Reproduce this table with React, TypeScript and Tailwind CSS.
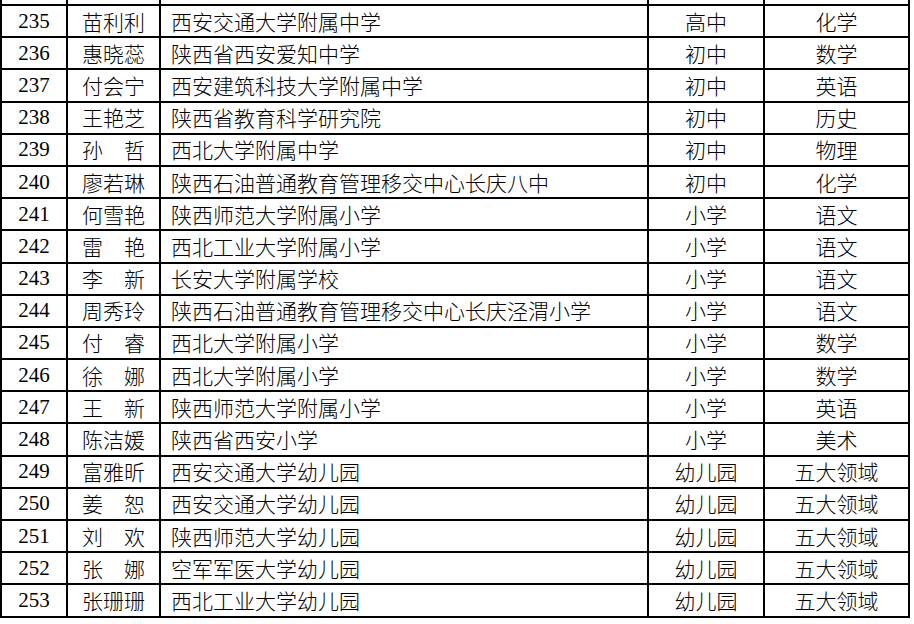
import React from "react";

type Row = [string, string, string, string, string];

const rows: Row[] = [
  ["235", "苗利利", "西安交通大学附属中学", "高中", "化学"],
  ["236", "惠晓蕊", "陕西省西安爱知中学", "初中", "数学"],
  ["237", "付会宁", "西安建筑科技大学附属中学", "初中", "英语"],
  ["238", "王艳芝", "陕西省教育科学研究院", "初中", "历史"],
  ["239", "孙哲", "西北大学附属中学", "初中", "物理"],
  ["240", "廖若琳", "陕西石油普通教育管理移交中心长庆八中", "初中", "化学"],
  ["241", "何雪艳", "陕西师范大学附属小学", "小学", "语文"],
  ["242", "雷艳", "西北工业大学附属小学", "小学", "语文"],
  ["243", "李新", "长安大学附属学校", "小学", "语文"],
  ["244", "周秀玲", "陕西石油普通教育管理移交中心长庆泾渭小学", "小学", "语文"],
  ["245", "付睿", "西北大学附属小学", "小学", "数学"],
  ["246", "徐娜", "西北大学附属小学", "小学", "数学"],
  ["247", "王新", "陕西师范大学附属小学", "小学", "英语"],
  ["248", "陈洁媛", "陕西省西安小学", "小学", "美术"],
  ["249", "富雅昕", "西安交通大学幼儿园", "幼儿园", "五大领域"],
  ["250", "姜恕", "西安交通大学幼儿园", "幼儿园", "五大领域"],
  ["251", "刘欢", "陕西师范大学幼儿园", "幼儿园", "五大领域"],
  ["252", "张娜", "空军军医大学幼儿园", "幼儿园", "五大领域"],
  ["253", "张珊珊", "西北工业大学幼儿园", "幼儿园", "五大领域"],
];

function Name({ n }: { n: string }) {
  const chars = Array.from(n);
  return (
    <div className="flex w-[3em] justify-between">
      {chars.map((c, i) => (
        <span key={i}>{c}</span>
      ))}
    </div>
  );
}

export default function App() {
  return (
    <div className="w-[914px] h-[624px] bg-white overflow-hidden text-black text-[21px] leading-none font-[family-name:Noto_Sans_CJK_SC]">
      <div className="w-[910px] border-l-2 border-black">
        <div className="flex h-[4px]">
          <div className="w-[66px] border-r-2 border-black" />
          <div className="w-[93px] border-r-2 border-black" />
          <div className="w-[488px] border-r-2 border-black" />
          <div className="w-[116px] border-r-2 border-black" />
          <div className="w-[145px] border-r-2 border-black" />
        </div>
        <div className="border-t-2 border-black">
          {rows.map((r) => (
            <div key={r[0]} className="flex h-[32.2px] border-b-2 border-black">
              <div className="w-[66px] border-r-2 border-black flex items-center justify-center">
                <span className="font-[family-name:Liberation_Serif] font-normal">{r[0]}</span>
              </div>
              <div className="w-[93px] border-r-2 border-black flex items-center justify-center font-light">
                <Name n={r[1]} />
              </div>
              <div className="w-[488px] border-r-2 border-black flex items-center pl-[10px] font-light">
                {r[2]}
              </div>
              <div className="w-[116px] border-r-2 border-black flex items-center justify-center font-light">
                {r[3]}
              </div>
              <div className="w-[145px] border-r-2 border-black flex items-center justify-center font-light">
                {r[4]}
              </div>
            </div>
          ))}
        </div>
      </div>
    </div>
  );
}
